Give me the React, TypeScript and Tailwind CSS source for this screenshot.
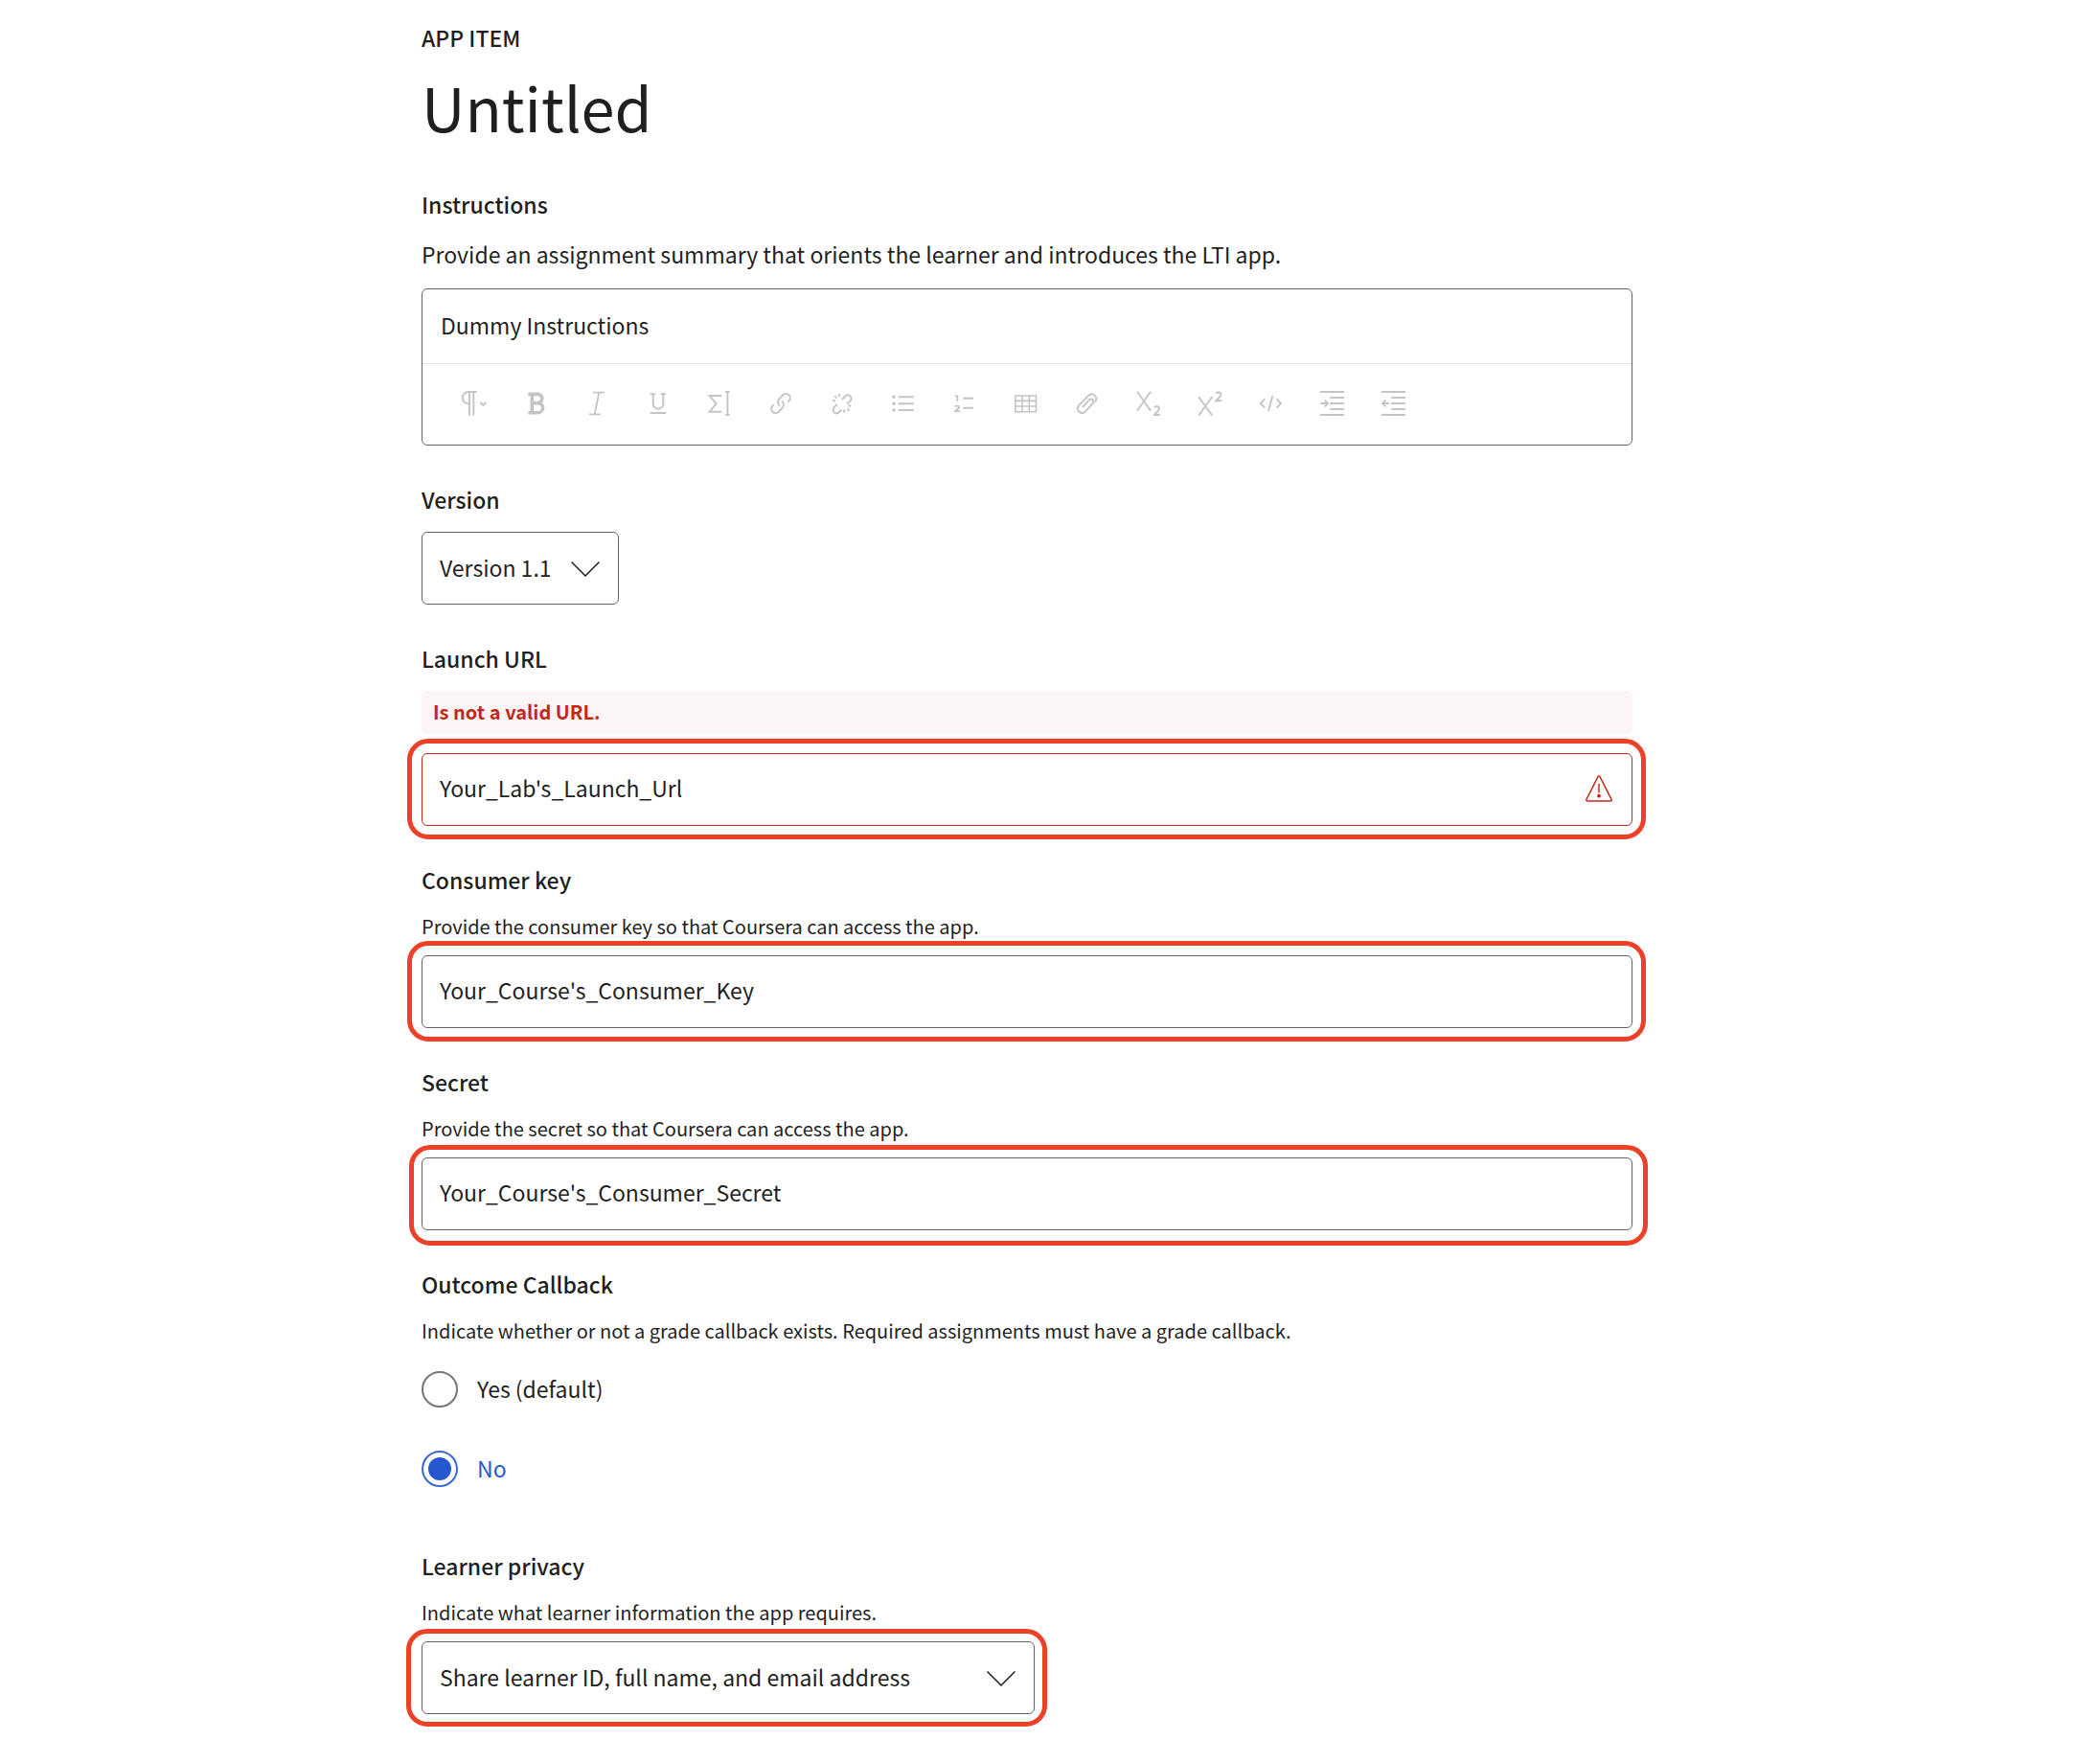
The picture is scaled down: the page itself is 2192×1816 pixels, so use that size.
import { useState, type ReactNode } from 'react';

const tools: { name: string; art: ReactNode }[] = [
  {
    name: 'Paragraph style',
    art: (
      <>
        <path d="M18.7 4H10a6.2 6.2 0 0 0 0 12.4h1M11 4v24.7M15.3 4v24.7" />
        <path d="m22.3 15 3 3 3-3" />
      </>
    ),
  },
  {
    name: 'Bold',
    art: (
      <path
        d="M8.3 6.4h9.900a4.600 4.600 0 0 1 0 9.200h-5.700M8.300 25.800h10.200a5.100 5.100 0 0 0 0-10.200M12.300 6.400v19.400"
        strokeWidth="3.6"
      />
    ),
  },
  { name: 'Italic', art: <path d="M12 4.6h12M8 27.4h11.7M18.3 4.6l-4.6 22.8" /> },
  {
    name: 'Underline',
    art: <path d="M8 6.2h5.3M18.7 6.2h5.3M10.7 6.2v10.2a5.3 5.3 0 0 0 10.6 0V6.2M7.7 26h16.6" />,
  },
  {
    name: 'Equation',
    art: (
      <>
        <path d="M18.3 8H5.6l7 8.3-7 8.4h12.7" />
        <path d="M24.4 4v24M22.2 4h4.4M22.2 28h4.4" />
      </>
    ),
  },
  {
    name: 'Link',
    art: (
      <g strokeLinecap="round">
        <path d="M23.8 14.2l1-1a4.4 4.4 0 0 0-6.2-6.2l-4.3 4.3a4.6 4.6 0 0 0 .2 6.6" />
        <path d="M8.2 17.8l-1 1a4.4 4.4 0 0 0 6.2 6.2l4.3-4.3a4.6 4.6 0 0 0-.2-6.6" />
      </g>
    ),
  },
  {
    name: 'Remove link',
    art: (
      <>
        <path d="M16 12l3-3.4c3.8-3.6 8.6 1 5.4 4.8l-3.2 3" />
        <path d="M10.800 17l-3.200 3.200c-3.200 3.800 1.600 8.400 5.400 4.800l2.600-2.600" />
        <path d="M12.8 6.2l.4 2.8M8.3 8.3l2.2 2.2M6 13l3 .6M18.2 25.6l-.2-3M23.6 23.7l-2.5-2.3M25.3 18.8l-3-.5" />
      </>
    ),
  },
  {
    name: 'Bulleted list',
    art: (
      <>
        <path d="M10.7 9.3h16M10.7 16.2h16M10.7 23h16" />
        <g fill="currentColor" stroke="none">
          <circle cx="6" cy="9.3" r="1.8" />
          <circle cx="6" cy="16.2" r="1.8" />
          <circle cx="6" cy="23" r="1.8" />
        </g>
      </>
    ),
  },
  {
    name: 'Numbered list',
    art: (
      <>
        <path d="M14.3 10.7H25M14.3 20.7H25" />
        <path d="M6 8.2h2.3V14M6 19.3c1-1 4.2-1 4 .8-.1 1.6-3.5 2.3-3.9 4.1H11" />
      </>
    ),
  },
  {
    name: 'Table',
    art: <path d="M4.8 8h21.7v16.8H4.8zM12 8v16.8M19.3 8v16.8M4.8 13.4h21.7M4.8 19h21.7" strokeWidth="1.6" />,
  },
  {
    name: 'Attachment',
    art: (
      <path
        d="M24.6 13.8c2.6-3.6-2.6-10.2-7.2-6.2L7.2 18.2c-4 4.8 2.4 10.4 6.6 6.4l8-8.6c2-2.8-1.4-6-4-3.6l-6.4 7"
        strokeLinecap="round"
      />
    ),
  },
  {
    name: 'Subscript',
    art: (
      <>
        <path d="M4 3.7l14 20M18 3.7l-14 20" />
        <path d="M21.900 20.300c1.600-1.800 5-1.500 5 1.100 0 2.200-3 4.200-5 6.600h6" />
      </>
    ),
  },
  {
    name: 'Superscript',
    art: (
      <>
        <path d="M4 9l14.4 19.7M18.4 9L4 28.7" />
        <path d="M22.300 5.600c1.600-1.800 5-1.500 5 1.100 0 2.200-3 4.200-5 6.600h6" />
      </>
    ),
  },
  {
    name: 'Code',
    art: <path d="M9.3 11.3L4.8 16l4.5 4.700M17.500 8l-4.700 16M21.500 11.300L26 16l-4.500 4.700" />,
  },
  {
    name: 'Increase indent',
    art: <path d="M3 4h25M13.3 10H28M13.3 16H28M13.3 22H28M3 28h25M3.3 16h7M7.6 12.6L11 16l-3.4 3.4" />,
  },
  {
    name: 'Decrease indent',
    art: <path d="M3 4h25M13.3 10H28M13.3 16H28M13.3 22H28M3 28h25M4 16h7M7.4 12.6L4 16l3.4 3.4" />,
  },
];

const labelClass = 'block text-[23px] leading-8 font-medium';
const hintClass = 'mt-[19px] text-[20px] leading-7';
const fieldClass =
  'block h-[76px] w-full appearance-none rounded-md border bg-white pl-[18px] text-[23px] leading-8 outline-none';

function Highlight({ className }: { className: string }) {
  return (
    <span
      aria-hidden="true"
      className={`pointer-events-none absolute rounded-[22px] border-5 border-[#ec4027] ${className}`}
    />
  );
}

function Chevron() {
  return (
    <svg
      aria-hidden="true"
      className="pointer-events-none absolute top-[31px] right-5 h-4 w-[30px]"
      viewBox="0 0 30 16"
      fill="none"
      stroke="currentColor"
      strokeWidth="1.5"
    >
      <path d="M.5.5L15 15 29.5.5" />
    </svg>
  );
}

function RadioOption({
  label,
  checked,
  onChange,
}: {
  label: string;
  checked: boolean;
  onChange: () => void;
}) {
  return (
    <label
      className={`flex w-fit items-center gap-5 text-[23px] leading-8 ${checked ? 'text-[#2558d0]' : ''}`}
    >
      <span className="grid size-[38px] place-items-center">
        <input
          type="radio"
          name="outcome-callback"
          checked={checked}
          onChange={onChange}
          className="peer col-start-1 row-start-1 size-full appearance-none rounded-full border-2 border-[#767676] bg-white checked:border-[#3a68d6]"
        />
        <span className="pointer-events-none col-start-1 row-start-1 hidden size-6 rounded-full bg-[#2558d0] peer-checked:block" />
      </span>
      <span className="pb-0.5">{label}</span>
    </label>
  );
}

export default function App() {
  const [callback, setCallback] = useState('no');

  return (
    <main className="min-h-screen bg-white px-8 pt-[23px] pb-6 font-['Noto_Sans_CJK_SC','Noto_Sans',sans-serif] text-[#1f1f1f] lg:pr-[488px] lg:pl-[440px]">
      <p className="text-[23px] leading-8 font-medium">APP ITEM</p>
      <h1 className="mt-4 text-[63px] leading-[80px]">Untitled</h1>

      <form className="mt-[46px] flex flex-col gap-10">
        <section>
          <label htmlFor="instructions" className={labelClass}>
            Instructions
          </label>
          <p className="mt-5 text-[23px] leading-8">
            Provide an assignment summary that orients the learner and introduces the LTI app.
          </p>
          <div className="mt-5 rounded-md border border-[#636363]">
            <textarea
              id="instructions"
              rows={1}
              defaultValue="Dummy Instructions"
              className="block h-[77px] w-full resize-none overflow-hidden rounded-t-md px-[19px] pt-[21px] text-[23px] leading-8 outline-none"
            />
            <div
              role="toolbar"
              aria-label="Formatting"
              className="flex flex-wrap border-t border-[#e3e3e3] px-[22px] pt-[9px] pb-[11px]"
            >
              {tools.map((tool) => (
                <button
                  key={tool.name}
                  type="button"
                  aria-label={tool.name}
                  className="grid size-16 place-items-center text-[#c4c4c4]"
                >
                  <svg
                    aria-hidden="true"
                    viewBox="0 0 32 32"
                    className="size-8"
                    fill="none"
                    stroke="currentColor"
                    strokeWidth="1.9"
                  >
                    {tool.art}
                  </svg>
                </button>
              ))}
            </div>
          </div>
        </section>

        <section>
          <label htmlFor="version" className={labelClass}>
            Version
          </label>
          <div className="relative mt-[18px] w-[206px]">
            <select id="version" className={`${fieldClass} border-[#636363] pr-14 pb-0.5`}>
              <option>Version 1.1</option>
            </select>
            <Chevron />
          </div>
        </section>

        <section>
          <label htmlFor="launch-url" className={labelClass}>
            Launch URL
          </label>
          <p
            id="launch-url-error"
            className="mt-[18px] rounded-md bg-[#fbf5f5] px-3 pt-2 pb-[9px] text-[20px] leading-7 font-bold text-[#c1281b]"
          >
            Is not a valid URL.
          </p>
          <div className="relative mt-5">
            <input
              id="launch-url"
              type="text"
              aria-invalid="true"
              aria-describedby="launch-url-error"
              defaultValue="Your_Lab's_Launch_Url"
              className={`${fieldClass} border-[#c1281b] pr-16 pb-1`}
            />
            <svg
              aria-hidden="true"
              className="pointer-events-none absolute top-[23px] right-[21px] size-7 text-[#c1281b]"
              viewBox="0 0 28 28"
              fill="none"
              stroke="currentColor"
              strokeWidth="1.5"
            >
              <path d="M13.1 1.5q.9-1.2 1.8 0l12.2 24q.3 1.5-1 1.5H1.9q-1.3 0-1-1.5z" />
              <path d="M14 9v9.500" />
              <circle cx="14" cy="21.700" r="1.900" fill="currentColor" stroke="none" />
            </svg>
            <Highlight className="-top-[15px] -right-3.5 -bottom-3.5 -left-[15px]" />
          </div>
        </section>

        <section>
          <label htmlFor="consumer-key" className={labelClass}>
            Consumer key
          </label>
          <p className={hintClass}>Provide the consumer key so that Coursera can access the app.</p>
          <div className="relative mt-4">
            <input
              id="consumer-key"
              type="text"
              defaultValue="Your_Course's_Consumer_Key"
              className={`${fieldClass} border-[#636363] pr-5 pb-1`}
            />
            <Highlight className="-top-[15px] -right-3.5 -bottom-3.5 -left-[15px]" />
          </div>
        </section>

        <section>
          <label htmlFor="secret" className={labelClass}>
            Secret
          </label>
          <p className={hintClass}>Provide the secret so that Coursera can access the app.</p>
          <div className="relative mt-4">
            <input
              id="secret"
              type="text"
              defaultValue="Your_Course's_Consumer_Secret"
              className={`${fieldClass} border-[#636363] pr-5 pb-1`}
            />
            <Highlight className="-top-[13px] -right-4 -bottom-4 -left-[13px]" />
          </div>
        </section>

        <fieldset>
          <legend className={labelClass}>Outcome Callback</legend>
          <p className={hintClass}>
            Indicate whether or not a grade callback exists. Required assignments must have a grade callback.
          </p>
          <div className="mt-7 flex flex-col gap-[45px]">
            <RadioOption
              label="Yes (default)"
              checked={callback === 'yes'}
              onChange={() => setCallback('yes')}
            />
            <RadioOption label="No" checked={callback === 'no'} onChange={() => setCallback('no')} />
          </div>
        </fieldset>

        <section className="mt-[26px]">
          <label htmlFor="privacy" className={labelClass}>
            Learner privacy
          </label>
          <p className={hintClass}>Indicate what learner information the app requires.</p>
          <div className="relative mt-4 max-w-[640px]">
            <select id="privacy" className={`${fieldClass} border-[#636363] pr-14 pb-0.5`}>
              <option>Share learner ID, full name, and email address</option>
            </select>
            <Chevron />
            <Highlight className="-top-[13px] -right-[13px] -bottom-[13px] -left-4" />
          </div>
        </section>
      </form>
    </main>
  );
}
